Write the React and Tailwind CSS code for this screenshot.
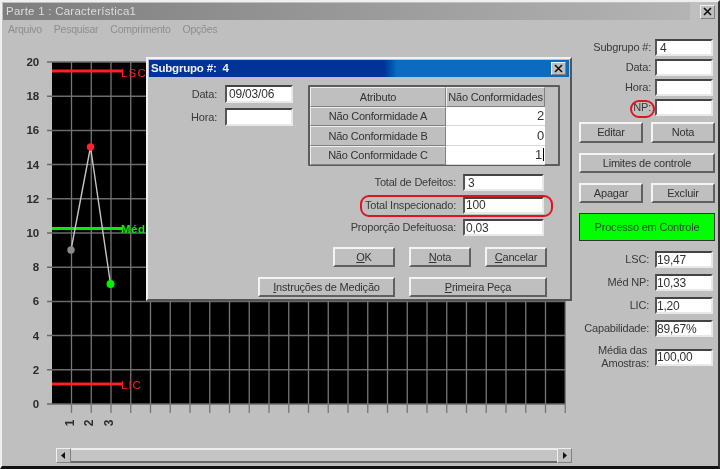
import React from "react";

const ys = [20, 18, 16, 14, 12, 10, 8, 6, 4, 2, 0];
const yOf = (v) => 404 - v * 17.1;
const xs = Array.from({ length: 26 }, (_, i) => 71.5 + i * 19.75);

function Chart() {
  return (
    <svg width="579" height="406" viewBox="0 39 579 406" className="block">
      <rect x="52" y="62" width="513" height="342" fill="#000" />
      {ys.map((v) => (
        <g key={v}>
          <line x1="47" x2="565" y1={yOf(v)} y2={yOf(v)} stroke="#6a6a6a" strokeWidth="1.5" />
          <text x="39" y={yOf(v) + 4} textAnchor="end" fontSize="11.5" fontWeight="700" fill="#2c2c2c" fontFamily="Liberation Sans">{v}</text>
        </g>
      ))}
      {xs.map((x) => (
        <line key={x} x1={x} x2={x} y1="62" y2="413" stroke="#767676" strokeWidth="1.3" />
      ))}
      <line x1="52" x2="122" y1="71" y2="71" stroke="#ff2020" strokeWidth="3" />
      <text x="121" y="77" fontSize="11.5" letterSpacing="1.2" fill="#ff2020" fontFamily="Liberation Sans">LSC</text>
      <line x1="52" x2="122" y1="228.500" y2="228.500" stroke="#00ee00" strokeWidth="3" />
      <text x="121" y="233" fontSize="11.5" fontWeight="700" letterSpacing="0.5" fill="#00ee00" fontFamily="Liberation Sans">Méd</text>
      <line x1="52" x2="122" y1="384" y2="384" stroke="#ff2020" strokeWidth="3" />
      <text x="121" y="389" fontSize="11.5" letterSpacing="1" fill="#ff2020" fontFamily="Liberation Sans">LIC</text>
      <polyline points="71,250 90.500,147 110.500,284" fill="none" stroke="#c4c4c4" strokeWidth="1.4" />
      <circle cx="71" cy="250" r="3.700" fill="#8a8a8a" />
      <circle cx="90.500" cy="147" r="3.700" fill="#ff2030" />
      <circle cx="110.500" cy="284" r="4" fill="#00f000" />
      {[1, 2, 3].map((n, i) => (
        <text key={n} transform={`translate(${73.5 + i * 19.75} 423) rotate(-90)`} textAnchor="middle" fontSize="12" fontWeight="700" fill="#2c2c2c" fontFamily="Liberation Sans">{n}</text>
      ))}
    </svg>
  );
}

function Bevel({ className = "", children }) {
  return (
    <div className={`flex items-center justify-center border-2 border-t-[#f4f4f4] border-l-[#f4f4f4] border-r-[#606060] border-b-[#606060] bg-[#bfbfbf] whitespace-nowrap text-[#333333] ${className}`}>
      {children}
    </div>
  );
}

function Cell({ className = "", children }) {
  return (
    <div className={`flex items-center justify-center border-t border-l border-r border-b border-t-[#f0f0f0] border-l-[#f0f0f0] border-r-[#808080] border-b-[#808080] bg-[#bfbfbf] whitespace-nowrap text-[#333333] ${className}`}>
      {children}
    </div>
  );
}

function Box({ w = "w-[58px]", h = "h-[17px]", children }) {
  return (
    <div className={`${w} ${h} flex shrink-0 items-center overflow-hidden border-2 border-t-[#444444] border-l-[#555555] border-r-[#e8e8e8] border-b-[#e8e8e8] bg-white text-[12px] text-[#333333]`}>
      {children}
    </div>
  );
}

function Field({ label, children, gap = "mr-[4px]" }) {
  return (
    <div className="flex items-center justify-end">
      <span className={`${gap} whitespace-nowrap text-[#3a3a3a]`}>{label}</span>
      <Box>{children}</Box>
    </div>
  );
}

function Right() {
  return (
    <div className="flex w-[136px] flex-col">
      <div className="flex flex-col gap-[3px] pr-[2px]">
        <Field label="Subgrupo #:"><span className="pl-[3px]">4</span></Field>
        <Field label="Data:" />
        <Field label="Hora:" />
        <Field label="NP:" />
      </div>
      <div className="mt-[6px] flex justify-between">
        <Bevel className="h-[21px] w-[64px]">Editar</Bevel>
        <Bevel className="h-[21px] w-[64px]">Nota</Bevel>
      </div>
      <Bevel className="mt-[10px] h-[20px]">Limites de controle</Bevel>
      <div className="mt-[10px] flex justify-between">
        <Bevel className="h-[20px] w-[64px]">Apagar</Bevel>
        <Bevel className="h-[20px] w-[64px]">Excluir</Bevel>
      </div>
      <div className="mt-[10px] flex h-[28px] items-center justify-center border border-[#333333] bg-[#00ff00] text-[#2a4a2a]">Processo em Controle</div>
      <div className="mt-[10px] flex flex-col gap-[6px] pr-[2px]">
        <Field label="LSC:" gap="mr-[6px]">19,47</Field>
        <Field label="Méd NP:" gap="mr-[6px]">10,33</Field>
        <Field label="LIC:" gap="mr-[6px]">1,20</Field>
        <Field label="Capabilidade:" gap="mr-[6px]">89,67%</Field>
      </div>
      <div className="mt-[7px] flex items-center justify-end pr-[2px]">
        <div className="mr-[6px] text-right leading-[13px] text-[#3a3a3a]">
          <div className="pr-[2px]">Média das</div>
          <div>Amostras:</div>
        </div>
        <Box>100,00</Box>
      </div>
    </div>
  );
}

function Row({ name, value, cursor }) {
  return (
    <div className="flex h-[19.500px]">
      <Cell className="w-[136px]">{name}</Cell>
      <div className="flex w-[99px] items-center justify-end border-b border-[#d8d8d8] bg-white pr-[1px] text-[13px] text-[#333333]">
        {value}
        {cursor && <span className="ml-[1px] h-[13px] w-[1px] bg-black" />}
      </div>
    </div>
  );
}

function Dialog() {
  return (
    <div className="absolute left-[144px] top-[55px] h-[244px] w-[426px] border-2 border-t-[#f2f2f2] border-l-[#f2f2f2] border-r-[#555555] border-b-[#555555] bg-[#bfbfbf] p-[1px]">
      <div className="flex h-[17px] items-center justify-between bg-linear-to-r from-[#003399] from-[56%] to-[#0a6bc0] to-[59%] pl-[2px] pr-[3px] text-[11.500px] font-bold text-[#f0f0f0]">
        <span className="whitespace-pre">Subgrupo #:  4</span>
        <Cell className="h-[13px] w-[15px]">
          <svg width="9" height="9" viewBox="0 0 9 9"><path d="M1 1 8 8M8 1 1 8" stroke="#111" strokeWidth="1.600" /></svg>
        </Cell>
      </div>
      <div className="flex pt-[8px]">
        <div className="flex w-[144px] flex-col items-end gap-[5px]">
          <div className="flex items-center">
            <span className="mr-[8px] text-[#3a3a3a]">Data:</span>
            <Box w="w-[68px]" h="h-[18px]"><span className="pl-[2px]">09/03/06</span></Box>
          </div>
          <div className="flex items-center">
            <span className="mr-[8px] text-[#3a3a3a]">Hora:</span>
            <Box w="w-[68px]" h="h-[18px]" />
          </div>
        </div>
        <div className="ml-[15px] h-[81px] w-[252px] rounded-[1px] border-2 border-[#5c5c5c] bg-[#bfbfbf]">
          <div className="flex h-[19.500px]">
            <Cell className="w-[136px]">Atributo</Cell>
            <Cell className="w-[99px]">Não Conformidades</Cell>
          </div>
          <Row name="Não Conformidade A" value="2" />
          <Row name="Não Conformidade B" value="0" />
          <Row name="Não Conformidade C" value="1" cursor />
        </div>
      </div>
      <div className="mt-[8px] flex flex-col gap-[5.500px] pr-[25px]">
        <div className="flex items-center justify-end">
          <span className="mr-[7px] text-[#3a3a3a]">Total de Defeitos:</span>
          <Box w="w-[81px]"><span className="pl-[3px]">3</span></Box>
        </div>
        <div className="flex items-center justify-end">
          <span className="mr-[7px] text-[#3a3a3a]">Total Inspecionado:</span>
          <Box w="w-[81px]"><span className="pl-[1px]">100</span></Box>
        </div>
        <div className="flex items-center justify-end">
          <span className="mr-[7px] text-[#3a3a3a]">Proporção Defeituosa:</span>
          <Box w="w-[81px]"><span className="pl-[1px]">0,03</span></Box>
        </div>
      </div>
      <div className="mt-[11px] flex justify-end gap-[14px] pr-[22px]">
        <Bevel className="h-[20px] w-[62px]"><span><u>O</u>K</span></Bevel>
        <Bevel className="h-[20px] w-[62px]"><span><u>N</u>ota</span></Bevel>
        <Bevel className="h-[20px] w-[62px]"><span><u>C</u>ancelar</span></Bevel>
      </div>
      <div className="mt-[10px] flex justify-end gap-[14px] pr-[22px]">
        <Bevel className="h-[20px] w-[137px]"><span><u>I</u>nstruções de Medição</span></Bevel>
        <Bevel className="h-[20px] w-[138px]"><span><u>P</u>rimeira Peça</span></Bevel>
      </div>
      <div className="absolute left-[212px] top-[136px] h-[22px] w-[193px] rounded-[9px] border-2 border-[#e0141e]" />
    </div>
  );
}

function Arrow({ left }) {
  return (
    <svg width="5" height="7" viewBox="0 0 5 7">
      <path d={left ? "M4 0 0 3.500 4 7Z" : "M1 0 5 3.500 1 7Z"} fill="#111" />
    </svg>
  );
}

export default function App() {
  return (
    <div className="relative h-[469px] w-[720px] overflow-hidden border-t-2 border-l-2 border-r-2 border-b-[3px] border-t-[#efefef] border-l-[#efefef] border-r-[#333333] border-b-[#111111] bg-[#bfbfbf] font-['Liberation_Sans',sans-serif] text-[11px] tracking-[-0.2px] blur-[0.5px]">
      <div className="ml-[1px] mt-[1px] flex h-[17px] items-center">
        <div className="flex h-full w-[687px] items-center bg-linear-to-r from-[#7e7e7e] to-[#b4b4b4] pl-[3px] text-[11.500px] font-medium tracking-[0.25px] text-[#dcdcdc]">
          Parte 1 : Característica1
        </div>
        <Cell className="ml-[10px] h-[14px] w-[15px]">
          <svg width="9" height="9" viewBox="0 0 9 9"><path d="M1 1 8 8M8 1 1 8" stroke="#111" strokeWidth="1.600" /></svg>
        </Cell>
      </div>
      <div className="flex h-[19px] items-center gap-[12px] pl-[6px] text-[10.500px] tracking-[-0.25px] text-[#8e8e8e]">
        <span>Arquivo</span>
        <span>Pesquisar</span>
        <span>Comprimento</span>
        <span>Opções</span>
      </div>
      <div className="flex">
        <div className="-ml-[2px] flex w-[579px] flex-col">
          <Chart />
          <div className="ml-[56px] mt-[3px] flex h-[15px] w-[516px]">
            <Cell className="h-[15px] w-[15px] shrink-0"><Arrow left /></Cell>
            <div className="flex-1 border-t-2 border-b-2 border-t-[#eeeeee] border-b-[#666666] bg-[#c4c4c4]" />
            <Cell className="h-[15px] w-[15px] shrink-0"><Arrow /></Cell>
          </div>
        </div>
        <Right />
      </div>
      <Dialog />
      <div className="absolute left-[628px] top-[98px] h-[18px] w-[25px] rounded-[9px] border-2 border-[#e0141e]" />
    </div>
  );
}
